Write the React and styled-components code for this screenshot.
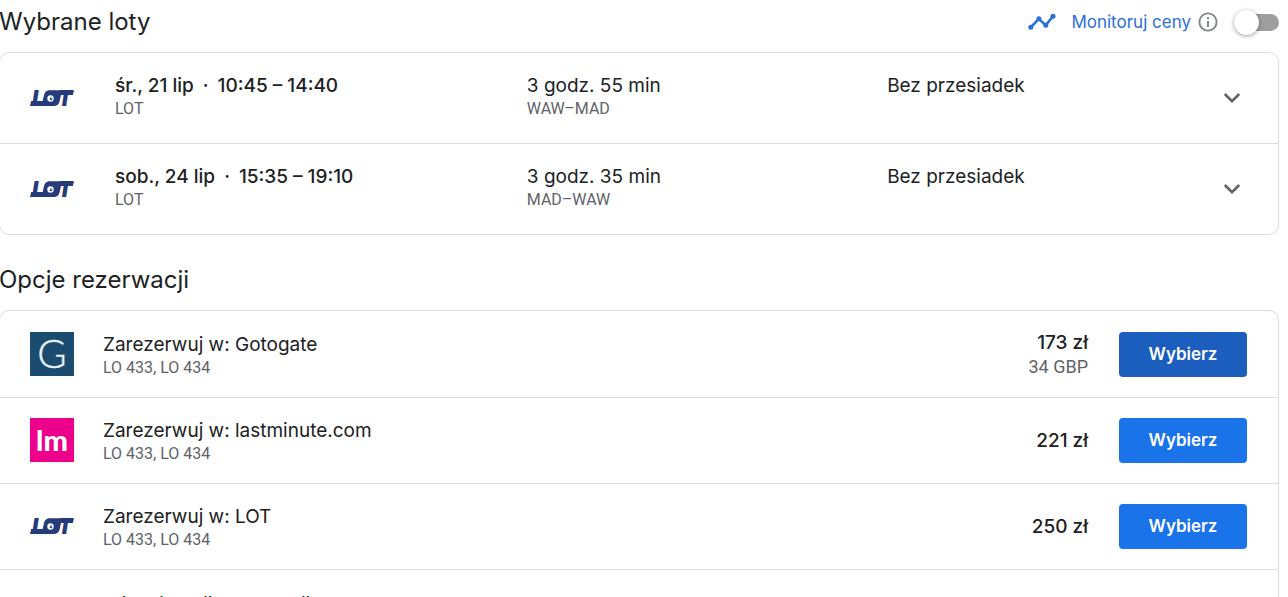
import React from 'react';
import styled, { createGlobalStyle } from 'styled-components';

const Global = createGlobalStyle`
  * { box-sizing: border-box; }
  html, body, #root { height: 100%; }
  body {
    margin: 0;
    overflow: hidden;
    background: #fff;
    color: #202124;
    font-family: Inter, "Open Sans", sans-serif;
  }
  h2, p, ul { margin: 0; padding: 0; }
  ul { list-style: none; }
`;

const Page = styled.main`
  height: 100%;
  overflow: hidden;
  padding-right: 9px;
`;

const SectionHeader = styled.header`
  display: flex;
  align-items: center;
  justify-content: space-between;
  height: ${p => (p.$top ? 52 : 75)}px;
  padding: ${p => (p.$top ? '0 0 8px' : '14px 0 0')};
`;

const Heading = styled.h2`
  margin-left: -1px;
  font-size: 24px;
  font-weight: 400;
  line-height: 32px;
`;

const Tracker = styled.div`
  display: flex;
  align-items: center;
  color: #2b6fd8;
`;

const TrackLabel = styled.label`
  margin: 0 7px 0 15px;
  font-size: 17px;
  line-height: 24px;
`;

const InfoButton = styled.button`
  display: flex;
  margin-right: 24px;
  padding: 0;
  border: 0;
  background: none;
  color: #80868b;
`;

const Switch = styled.input`
  appearance: none;
  display: flex;
  align-items: center;
  width: 37px;
  height: 17px;
  margin: 0;
  border-radius: 9px;
  background: #9e9e9e;
  &::before {
    content: '';
    flex: none;
    width: 25px;
    height: 25px;
    margin: 0 -8px;
    border-radius: 50%;
    background: #fff;
    box-shadow: 0 1px 4px rgba(0, 0, 0, 0.4);
  }
  &:checked { justify-content: flex-end; }
`;

const Card = styled.ul`
  margin-left: -1px;
  padding-top: ${p => (p.$offers ? 1 : 0)}px;
  border: 1px solid #dadce0;
  border-radius: 10px;
`;

const FlightRow = styled.li`
  display: grid;
  grid-template-columns: 85px 8fr 7fr 6fr 52px;
  height: 90px;
  padding: 0 30px;
  & + & { height: 91px; border-top: 1px solid #dadce0; }
`;

const LogoCell = styled.div`
  display: flex;
  align-items: center;
`;

const FlightCell = styled.div`
  padding-top: 21px;
  white-space: nowrap;
`;

const Title = styled.p`
  font-size: 19px;
  font-weight: ${p => (p.$strong ? 500 : 400)};
  line-height: 24px;
`;

const Detail = styled.p`
  color: #5f6368;
  font-family: Roboto, sans-serif;
  font-size: ${p => (p.$large ? 18 : 16)}px;
  line-height: ${p => (p.$large ? 24 : 22)}px;
`;

const Dot = styled.span`
  margin: 0 9px;
`;

const ExpandButton = styled.button`
  align-self: center;
  justify-self: end;
  display: flex;
  align-items: center;
  justify-content: center;
  width: 32px;
  height: 32px;
  padding: 0;
  border: 0;
  background: none;
  color: #5f6368;
`;

const OfferRow = styled.li`
  display: flex;
  align-items: flex-start;
  height: 86px;
  padding: 20px 31px 20px 30px;
  border-bottom: 1px solid #dadce0;
`;

const OfferLogo = styled.div`
  display: flex;
  align-items: center;
  width: 73px;
  height: 44px;
`;

const OfferText = styled.div`
  flex: 1;
  padding-top: 1px;
`;

const Price = styled.div`
  display: flex;
  flex-direction: column;
  justify-content: center;
  height: 46px;
  margin-right: 31px;
  text-align: right;
`;

const ChooseButton = styled.button`
  width: 128px;
  height: 45px;
  padding: 0 0 2px;
  border: 0;
  border-radius: 4px;
  background: ${p => (p.$active ? '#1b5ebd' : '#1a73e8')};
  color: #fff;
  font: 600 17px/24px Inter, sans-serif;
`;

const MoreRow = styled.li`
  padding: 23px 30px 23px 103px;
`;

const LogoText = styled.text`
  font-family: ${p => p.$family}, sans-serif;
  font-size: ${p => p.$size}px;
  font-weight: ${p => p.$weight};
  font-style: ${p => (p.$italic ? 'italic' : 'normal')};
  text-anchor: middle;
`;

const LotLogo = () => (
  <svg width="44" height="32" viewBox="0 -6 44 32" role="img" aria-label="LOT">
    <g fill="#253b7a">
      <LogoText x="8" y="18" $family="Inter" $size={21} $weight={900} $italic>L</LogoText>
      <LogoText x="35" y="18" $family="Inter" $size={21} $weight={900} $italic>T</LogoText>
      <path d="M0 18l1.200-5h22l-2 5z" />
      <path d="M18 2.500h26l-1.200 4.500H18z" />
      <path d="M19 2.500h10q3 0 2.200 3.500l-1.500 7q-1 5-6 5h-7q-5 0-4-5l1.200-5.500q1-5 5.100-5z" />
    </g>
    <circle cx="20.500" cy="10.500" r="3.200" fill="#fff" />
    <path d="M18 10.200l1.700 1.300 1.500-3.400.2 2.700 1.600-.4-1.900 2.100z" fill="#253b7a" />
  </svg>
);

const GotogateLogo = () => (
  <svg width="44" height="44" viewBox="0 0 44 44" role="img" aria-label="Gotogate">
    <rect width="44" height="44" fill="#1b4c70" />
    <LogoText x="22" y="36" fill="#e9f3f8" stroke="#e9f3f8" strokeWidth="0.4" $family="Lato" $size={40} $weight={300}>G</LogoText>
  </svg>
);

const LastminuteLogo = () => (
  <svg width="44" height="44" viewBox="0 0 44 44" role="img" aria-label="lastminute.com">
    <rect width="44" height="44" fill="#ec008c" />
    <LogoText x="22" y="33" fill="#fff" $family="Lato" $size={29} $weight={900}>lm</LogoText>
  </svg>
);

const TrendIcon = () => (
  <svg width="28" height="18" viewBox="0 0 28 18" aria-hidden="true">
    <g fill="#2b6fd8">
      <path d="M2.800 14.200l8-8.200 7 6.200L25 3.300" fill="none" stroke="#2b6fd8" strokeWidth="2.600" />
      <circle cx="2.800" cy="14.200" r="2.500" />
      <circle cx="10.900" cy="5.800" r="2.500" />
      <circle cx="17.800" cy="12.200" r="2.500" />
      <circle cx="25" cy="3.300" r="2.500" />
    </g>
  </svg>
);

const InfoIcon = () => (
  <svg width="20" height="20" viewBox="0 0 20 20" aria-hidden="true">
    <circle cx="10" cy="10" r="8.600" fill="none" stroke="currentColor" strokeWidth="1.900" />
    <path d="M10 9v6M10 5.200v2" stroke="currentColor" strokeWidth="2" />
  </svg>
);

const ChevronIcon = () => (
  <svg width="18" height="12" viewBox="0 0 18 12" aria-hidden="true">
    <path d="M1.800 2l7.200 7.200L16.200 2" fill="none" stroke="currentColor" strokeWidth="2.500" />
  </svg>
);

const flights = [
  { date: 'śr., 21 lip', time: '10:45 – 14:40', duration: '3 godz. 55 min', route: 'WAW–MAD' },
  { date: 'sob., 24 lip', time: '15:35 – 19:10', duration: '3 godz. 35 min', route: 'MAD–WAW' },
];

const offers = [
  { name: 'Gotogate', price: '173 zł', foreign: '34 GBP', Logo: GotogateLogo, active: true },
  { name: 'lastminute.com', price: '221 zł', Logo: LastminuteLogo },
  { name: 'LOT', price: '250 zł', Logo: LotLogo },
];

export default function App() {
  return (
    <Page>
      <Global />
      <SectionHeader $top>
        <Heading>Wybrane loty</Heading>
        <Tracker>
          <TrendIcon />
          <TrackLabel htmlFor="track">Monitoruj ceny</TrackLabel>
          <InfoButton aria-label="Informacje"><InfoIcon /></InfoButton>
          <Switch id="track" type="checkbox" role="switch" />
        </Tracker>
      </SectionHeader>
      <Card>
        {flights.map(f => (
          <FlightRow key={f.route}>
            <LogoCell><LotLogo /></LogoCell>
            <FlightCell>
              <Title $strong>{f.date}<Dot>·</Dot>{f.time}</Title>
              <Detail>LOT</Detail>
            </FlightCell>
            <FlightCell>
              <Title>{f.duration}</Title>
              <Detail>{f.route}</Detail>
            </FlightCell>
            <FlightCell><Title>Bez przesiadek</Title></FlightCell>
            <ExpandButton aria-label="Szczegóły lotu"><ChevronIcon /></ExpandButton>
          </FlightRow>
        ))}
      </Card>
      <SectionHeader><Heading>Opcje rezerwacji</Heading></SectionHeader>
      <Card $offers>
        {offers.map(({ name, price, foreign, Logo, active }) => (
          <OfferRow key={name}>
            <OfferLogo><Logo /></OfferLogo>
            <OfferText>
              <Title>Zarezerwuj w: {name}</Title>
              <Detail>LO 433, LO 434</Detail>
            </OfferText>
            <Price>
              <Title $strong>{price}</Title>
              {foreign && <Detail $large>{foreign}</Detail>}
            </Price>
            <ChooseButton $active={active}>Wybierz</ChooseButton>
          </OfferRow>
        ))}
        <MoreRow><Title>Więcej opcji rezerwacji</Title></MoreRow>
      </Card>
    </Page>
  );
}
